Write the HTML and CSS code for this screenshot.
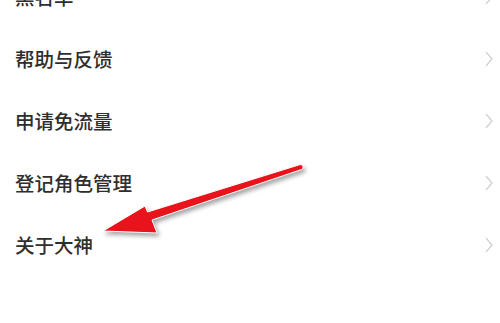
FILE: index.html
```html
<!DOCTYPE html>
<html lang="zh">
<head>
<meta charset="utf-8">
<link rel="stylesheet" href="styles.css">
</head>
<body>
<ul class="menu">
  <li class="row"><span class="label">黑名单</span><svg class="chev" viewBox="0 0 8 16"><polyline points="1,1 7,8 1,15"/></svg></li>
  <li class="row"><span class="label">帮助与反馈</span><svg class="chev" viewBox="0 0 8 16"><polyline points="1,1 7,8 1,15"/></svg></li>
  <li class="row"><span class="label">申请免流量</span><svg class="chev" viewBox="0 0 8 16"><polyline points="1,1 7,8 1,15"/></svg></li>
  <li class="row"><span class="label">登记角色管理</span><svg class="chev" viewBox="0 0 8 16"><polyline points="1,1 7,8 1,15"/></svg></li>
  <li class="row"><span class="label">关于大神</span><svg class="chev" viewBox="0 0 8 16"><polyline points="1,1 7,8 1,15"/></svg></li>
</ul>
<svg class="arrow" viewBox="0 0 500 323" width="500" height="323">
  <path d="M103,231 L145,206 L147.5,212 L300,164.6 A2.6,2.6 0 0 1 301.8,169.4 L152,220 L157,233 Z"/>
</svg>
</body>
</html>
```
FILE: styles.css
```css
html, body {
  margin: 0;
  padding: 0;
  background: #ffffff;
  width: 500px;
  height: 323px;
  overflow: hidden;
}
body {
  position: relative;
  font-family: "Noto Sans CJK SC", "Noto Sans", sans-serif;
}
.menu {
  list-style: none;
  margin: -34px 0 0 0;
  padding: 0;
}
.row {
  height: 62px;
  display: flex;
  align-items: center;
  justify-content: space-between;
  padding: 0 7px 0 15px;
}
.label {
  font-size: 19.5px;
  font-weight: 500;
  color: #2e2e2e;
  line-height: 1;
}
.chev {
  width: 8px;
  height: 16px;
  fill: none;
  stroke: #d0d0d0;
  stroke-width: 1.3;
}
.arrow {
  position: absolute;
  left: 0;
  top: 0;
  pointer-events: none;
}
.arrow path {
  fill: #e8131b;
  stroke: #ffffff;
  stroke-width: 1;
  stroke-linejoin: round;
  filter: drop-shadow(2px 3px 2px rgba(0,0,0,0.35));
}
```
